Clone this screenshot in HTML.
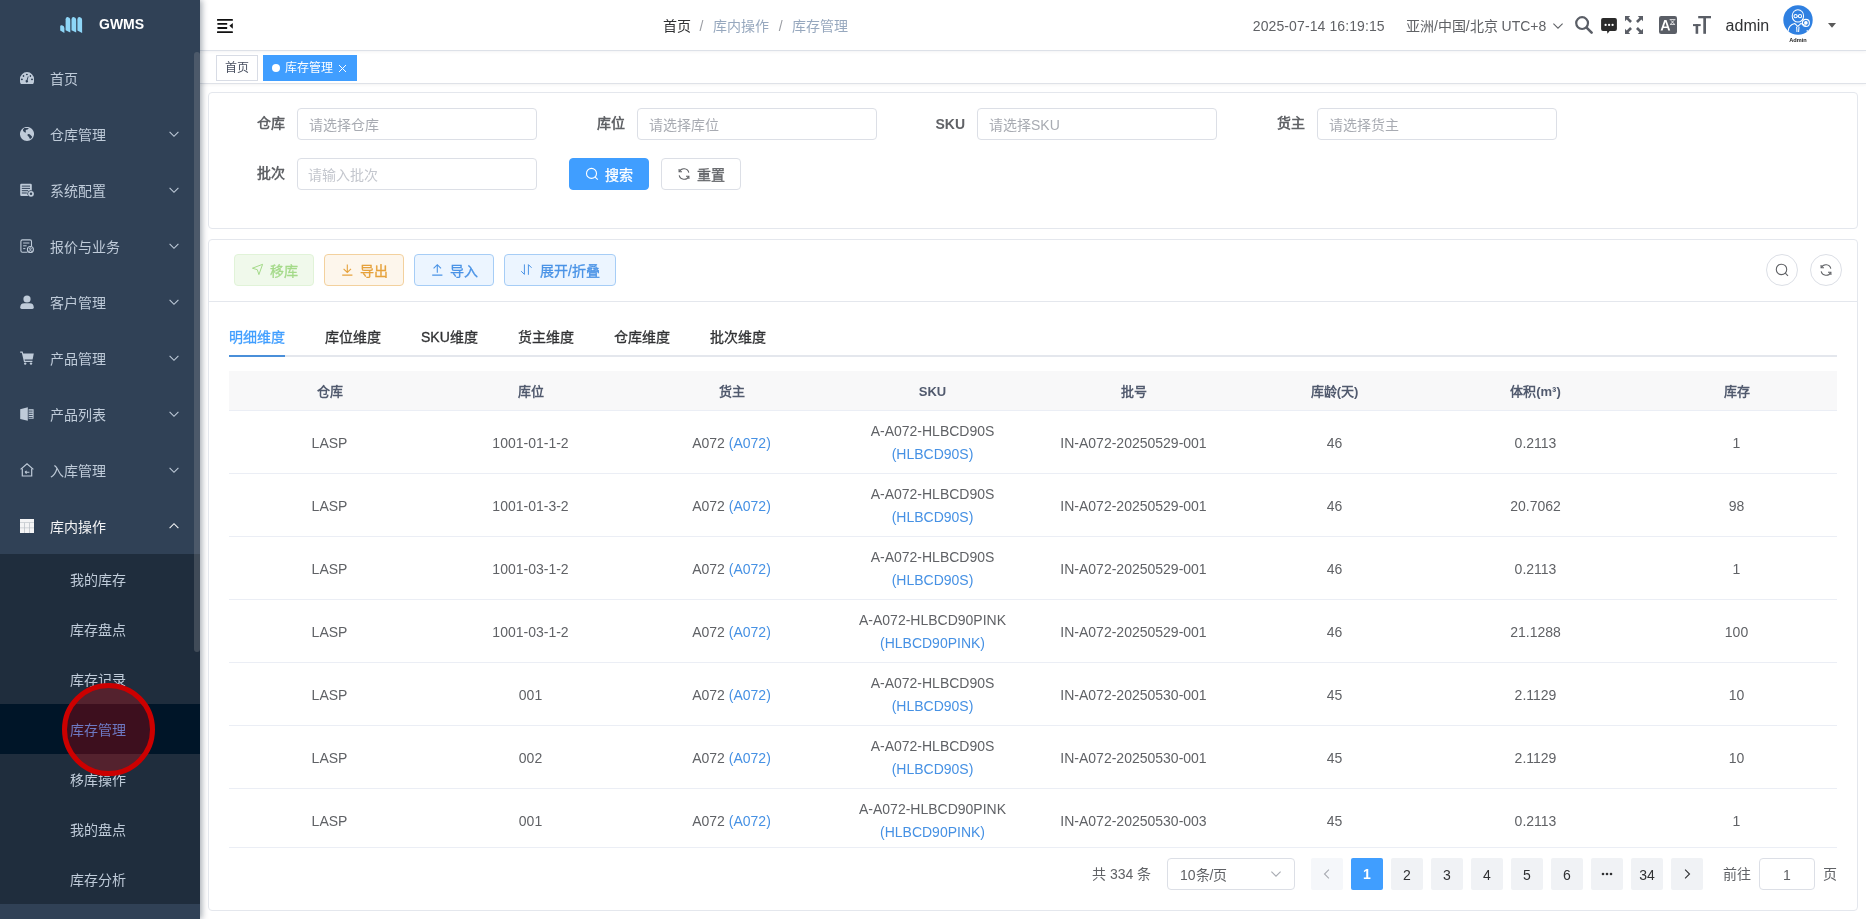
<!DOCTYPE html>
<html lang="zh-CN">
<head>
<meta charset="utf-8">
<title>GWMS</title>
<style>
*{box-sizing:border-box;margin:0;padding:0}
html,body{width:1866px;height:919px;overflow:hidden;background:#fff}
body{will-change:transform;position:relative;font-family:"Liberation Sans",sans-serif;font-size:14px;color:#606266;-webkit-font-smoothing:antialiased}
.abs{position:absolute}
svg{display:block}
/* ---------- sidebar ---------- */
#sidebar{position:absolute;left:0;top:0;width:200px;height:919px;background:#304156;box-shadow:2px 0 6px rgba(0,21,41,.35);z-index:10;overflow:hidden}
#logo-text{position:absolute;left:99px;top:14px;height:20px;line-height:20px;font-size:14px;font-weight:700;color:#fff;letter-spacing:0}
.mi{position:absolute;left:0;width:200px;height:56px;line-height:56px;color:#bfcbd9;font-size:14px}
.mi .ic{position:absolute;left:20px;top:21px;width:14px;height:14px}
.mi .tx{position:absolute;left:50px;top:1px;white-space:nowrap}
.mi .ar{position:absolute;left:168px;top:22px;width:12px;height:12px}
.mi.on{color:#f4f4f5}
#sub{position:absolute;left:0;top:554px;width:200px;height:350px;background:#1f2d3d}
.si{position:absolute;left:0;width:200px;height:50px;line-height:50px;color:#bfcbd9;font-size:14px}
.si span{position:absolute;left:70px;top:1px;white-space:nowrap}
.si.act{background:#001528;color:#409eff}
#sbthumb{position:absolute;left:194px;top:52px;width:6px;height:600px;border-radius:3px;background:rgba(144,147,153,.3)}
/* ---------- navbar ---------- */
#navbar{position:absolute;left:200px;top:0;width:1666px;height:51px;background:#fff;border-bottom:1px solid #dde1e8;box-shadow:0 1px 3px rgba(0,21,41,.05);z-index:3}
.bc{position:absolute;top:16px;height:20px;line-height:20px;font-size:14px;white-space:nowrap}
.nt{position:absolute;top:16px;height:20px;line-height:20px;font-size:14px;white-space:nowrap;color:#606266}
/* ---------- tags ---------- */
#tags{position:absolute;left:200px;top:50px;width:1666px;height:34px;background:#fff;border-bottom:1px solid #dfe2e8;box-shadow:0 1px 3px 0 rgba(0,0,0,.05);z-index:2}
.tag{position:absolute;top:5px;height:26px;line-height:24px;border:1px solid #d8dce5;font-size:12px;color:#495060;background:#fff;white-space:nowrap}
/* ---------- cards ---------- */
.card{position:absolute;left:208px;width:1650px;background:#fff;border:1px solid #e4e7ed;border-radius:4px}
.lbl{position:absolute;height:32px;line-height:31px;font-size:14px;font-weight:700;color:#606266;white-space:nowrap}
.inp{position:absolute;width:240px;height:32px;border:1px solid #dcdfe6;border-radius:4px;background:#fff;line-height:32px;padding-left:11px;font-size:14px;color:#a8abb2;white-space:nowrap}
.btn{position:absolute;height:32px;border-radius:4px;border:1px solid #dcdfe6;font-size:14px;font-weight:500;line-height:30px;white-space:nowrap}
.btn svg{position:absolute}
.btn span{position:absolute;top:1px;-webkit-text-stroke:.3px currentColor}

.tab{position:absolute;top:77px;height:40px;line-height:40px;font-size:14px;font-weight:500;white-space:nowrap;-webkit-text-stroke:.3px currentColor}
.thead{position:relative;height:40px;background:#f8f8f9;border-bottom:1px solid #ebeef5;display:flex}
.th{width:201px;height:39px;line-height:41px;text-align:center;font-size:13px;font-weight:700;color:#515a6e;white-space:nowrap}
.tr{position:relative;height:63px;border-bottom:1px solid #ebeef5;display:flex}
.td{width:201px;height:62px;padding-top:2px;display:flex;align-items:center;justify-content:center;text-align:center;font-size:14px;color:#606266;line-height:23px;white-space:pre}
.two{line-height:23px}
.lk{color:#4691e4}
.pg-t{height:32px;line-height:32px;font-size:14px;color:#606266;white-space:nowrap}
.pb{position:absolute;top:618px;width:32px;height:32px;border-radius:2px;background:#f0f2f5;line-height:34px;text-align:center;font-size:14px;color:#303133}
</style>
</head>
<body>
<!-- SIDEBAR -->
<div id="sidebar">
  <svg class="abs" style="left:59px;top:16px" width="24" height="18" viewBox="0 0 24 18">
    <g fill="#8ed6f7">
      <path d="M1.2 10.6 Q1.2 8.8 3 9.2 Q5.4 9.9 5.4 12 L5.4 16.9 L1.2 14.6 Z"/>
      <path d="M6.6 3.6 Q6.6 0.8 8.6 1.1 Q11.3 1.6 11.3 4.4 L11.3 16.6 L6.6 14.3 Z"/>
      <path d="M12.5 3.6 Q12.5 0.8 14.5 1.1 Q17.2 1.6 17.2 4.4 L17.2 16.6 L12.5 14.3 Z"/>
      <path d="M18.4 3.6 Q18.4 0.8 20.4 1.1 Q23.1 1.6 23.1 4.4 L23.1 16.9 L18.4 14.6 Z"/>
    </g>
  </svg>
  <div id="logo-text">GWMS</div>
  <div id="menu"><div class="mi" style="top:50px"><svg class="ic" viewBox="0 0 14 14"><path fill="currentColor" d="M7 1.1 A7 7 0 0 0 0 8.1 V10.6 Q0 11.9 .9 13 H13.1 Q14 11.9 14 10.6 V8.1 A7 7 0 0 0 7 1.1 Z"/>
<g fill="#304156"><ellipse cx="1.9" cy="8.4" rx="1" ry=".8"/><ellipse cx="3.5" cy="4.9" rx=".8" ry="1"/><ellipse cx="6.9" cy="3.5" rx="1" ry=".8"/><ellipse cx="10.4" cy="4.9" rx=".8" ry="1"/><ellipse cx="12" cy="8.4" rx="1" ry=".8"/><path d="M7.9 5.3 L8.6 5.5 L7.6 9.2 A1.25 1.25 0 1 1 6.6 8.95 Z"/></g></svg><span class="tx">首页</span></div>
<div class="mi" style="top:106px"><svg class="ic" viewBox="0 0 14 14"><circle cx="7" cy="6.95" r="7.05" fill="currentColor"/>
<g fill="#304156"><path d="M3 2.6 L4.4 1.1 L8.9 1.1 L7.6 2.4 L6.3 2.8 L5.6 3.6 L5.9 4.9 L5.5 5.7 L4.2 4.9 L3.1 3.9Z"/><path d="M7.2 8 L8.2 7.1 L9.7 7.3 L10.7 8.3 L12 9.6 L11.75 10.7 L10.7 11.7 L9.7 11.7 L9.4 10.7 L8.5 9.4Z"/></g></svg><span class="tx">仓库管理</span><svg class="ar" viewBox="0 0 12 12" fill="none" stroke="currentColor" stroke-width="1.1"><path d="M1.6 3.9 L6 8.3 L10.4 3.9"/></svg></div>
<div class="mi" style="top:162px"><svg class="ic" viewBox="0 0 14 14"><path fill="currentColor" d="M1.4 .8 H10.6 Q11.8 .8 11.8 2 V7.4 A3.4 3.4 0 0 0 8.2 12.9 H1.4 Q.2 12.9 .2 11.7 V2 Q.2 .8 1.4 .8Z"/>
<g fill="#304156"><rect x="1.8" y="2.6" width="8.2" height="1"/><rect x="1.8" y="4.9" width="8.2" height="1"/><rect x="1.8" y="7.2" width="6.4" height="1"/><rect x="1.8" y="9.5" width="5" height="1"/></g>
<circle cx="11" cy="10.8" r="2.9" fill="currentColor"/><circle cx="11" cy="10.8" r="1.2" fill="#304156"/></svg><span class="tx">系统配置</span><svg class="ar" viewBox="0 0 12 12" fill="none" stroke="currentColor" stroke-width="1.1"><path d="M1.6 3.9 L6 8.3 L10.4 3.9"/></svg></div>
<div class="mi" style="top:218px"><svg class="ic" viewBox="0 0 14 14" fill="none" stroke="currentColor" stroke-width="1.1"><path d="M7.4 13.2 H2.4 Q.9 13.2 .9 11.7 V2.4 Q.9 .9 2.4 .9 H10 Q11.5 .9 11.5 2.4 V7.2"/><path d="M3.2 4 H9.4 M3.2 6.8 H6.6 M3.2 9.6 H5.4" stroke-width="1"/><circle cx="10.4" cy="10.5" r="3"/><circle cx="10.4" cy="9.7" r=".9" stroke-width=".9"/><path d="M8.7 12.5 Q10.4 10.6 12.1 12.5" stroke-width=".9"/></svg><span class="tx">报价与业务</span><svg class="ar" viewBox="0 0 12 12" fill="none" stroke="currentColor" stroke-width="1.1"><path d="M1.6 3.9 L6 8.3 L10.4 3.9"/></svg></div>
<div class="mi" style="top:274px"><svg class="ic" viewBox="0 0 14 14"><g fill="currentColor"><ellipse cx="7" cy="4" rx="3.6" ry="3.5"/><path d="M.2 12.6 Q.2 8.2 4.4 8.2 H9.6 Q13.8 8.2 13.8 12.6 Q13.8 14 12.4 14 H1.6 Q.2 14 .2 12.6Z"/></g></svg><span class="tx">客户管理</span><svg class="ar" viewBox="0 0 12 12" fill="none" stroke="currentColor" stroke-width="1.1"><path d="M1.6 3.9 L6 8.3 L10.4 3.9"/></svg></div>
<div class="mi" style="top:330px"><svg class="ic" viewBox="0 0 14 14"><g fill="currentColor"><path d="M.2 .6 H2.6 L3.2 2.6 H13.8 L12.6 8.6 H4.6 L4.9 9.8 H12.4 V11 H4 L1.8 1.8 H.2Z"/><circle cx="5.2" cy="12.6" r="1.2"/><circle cx="11" cy="12.6" r="1.2"/></g></svg><span class="tx">产品管理</span><svg class="ar" viewBox="0 0 12 12" fill="none" stroke="currentColor" stroke-width="1.1"><path d="M1.6 3.9 L6 8.3 L10.4 3.9"/></svg></div>
<div class="mi" style="top:386px"><svg class="ic" viewBox="0 0 14 14"><g fill="currentColor"><path d="M.2 2.2 L7.8 .2 V13.8 L.2 12Z"/><path d="M8.6 2.2 H13.6 V11.8 H8.6Z"/></g><g fill="#304156"><rect x="8.6" y="3.6" width="4" height=".9"/><rect x="8.6" y="5.8" width="4" height=".9"/><rect x="8.6" y="8" width="4" height=".9"/><rect x="8.6" y="10.2" width="4" height=".9"/></g></svg><span class="tx">产品列表</span><svg class="ar" viewBox="0 0 12 12" fill="none" stroke="currentColor" stroke-width="1.1"><path d="M1.6 3.9 L6 8.3 L10.4 3.9"/></svg></div>
<div class="mi" style="top:442px"><svg class="ic" viewBox="0 0 14 14" fill="none" stroke="currentColor" stroke-width="1.2"><path d="M.6 6.4 L7 .9 L13.4 6.4"/><path d="M2.3 5.6 V13 H11.7 V5.6"/><path d="M5 9.2 H9.4 M5 9.2 L6.6 7.8 M5 9.2 L6.6 10.6" stroke-width="1.1"/></svg><span class="tx">入库管理</span><svg class="ar" viewBox="0 0 12 12" fill="none" stroke="currentColor" stroke-width="1.1"><path d="M1.6 3.9 L6 8.3 L10.4 3.9"/></svg></div>
<div class="mi on" style="top:498px"><svg class="ic" viewBox="0 0 14 14"><rect x="0" y="0" width="14" height="14" fill="currentColor"/><g fill="#304156" opacity=".3"><rect x="4.3" y="3.8" width=".7" height="10.2"/><rect x="9" y="3.8" width=".7" height="10.2"/><rect x="0" y="3.4" width="14" height=".6"/><rect x="0" y="8.6" width="14" height=".6"/></g></svg><span class="tx">库内操作</span><svg class="ar" viewBox="0 0 12 12" fill="none" stroke="currentColor" stroke-width="1.1"><path d="M1.6 8.1 L6 3.7 L10.4 8.1"/></svg></div>
</div>
  <div id="sub"><div class="si" style="top:0px"><span>我的库存</span></div>
<div class="si" style="top:50px"><span>库存盘点</span></div>
<div class="si" style="top:100px"><span>库存记录</span></div>
<div class="si act" style="top:150px"><span>库存管理</span></div>
<div class="si" style="top:200px"><span>移库操作</span></div>
<div class="si" style="top:250px"><span>我的盘点</span></div>
<div class="si" style="top:300px"><span>库存分析</span></div>
</div>
  <div id="sbthumb"></div>
</div>
<!-- NAVBAR -->
<div id="navbar">
  <svg class="abs" style="left:17px;top:18px" width="16" height="16" viewBox="0 0 16 16"><g fill="#111"><rect x="0" y="0.9" width="15.9" height="1.8" rx=".5"/><rect x=".4" y="5" width="9.8" height="1.8" rx=".4"/><rect x=".4" y="9.1" width="9.8" height="1.8" rx=".4"/><rect x="0" y="13.2" width="15.9" height="1.8" rx=".5"/><path d="M15.8 5 V10.7 L12.4 7.85 Z"/></g></svg>
  <span class="bc" style="left:462.5px;color:#303133">首页</span>
  <span class="bc" style="left:499.6px;color:#9a9da3;font-weight:400">/</span>
  <span class="bc" style="left:513px;color:#97a8be">库内操作</span>
  <span class="bc" style="left:578.8px;color:#9a9da3;font-weight:400">/</span>
  <span class="bc" style="left:792.2px;color:#97a8be;margin-left:-200px">库存管理</span>
  <span class="nt" style="left:1052.8px;letter-spacing:.1px">2025-07-14 16:19:15</span>
  <span class="nt" style="left:1205.9px">亚洲/中国/北京 UTC+8</span>
  <svg class="abs" style="left:1352px;top:20px" width="12" height="12" viewBox="0 0 12 12" fill="none" stroke="#606266" stroke-width="1.1"><path d="M1.4 3.6 L6 8.2 L10.6 3.6"/></svg>
  <!-- search -->
  <svg class="abs" style="left:1375px;top:16px" width="18" height="18" viewBox="0 0 18 18" fill="none" stroke="#5a5e66"><circle cx="7.1" cy="7.1" r="5.9" stroke-width="2.2"/><path d="M11.6 11.6 L16.6 16.6" stroke-width="2.6" stroke-linecap="round"/></svg>
  <!-- message -->
  <svg class="abs" style="left:1400px;top:17px" width="18" height="18" viewBox="0 0 18 18"><path fill="#2a2a2a" d="M3 1 H15 Q16.9 1 16.9 2.9 V12 Q16.9 13.9 15 13.9 H9.6 L7.5 16.7 L7 13.9 H3 Q1.1 13.9 1.1 12 V2.9 Q1.1 1 3 1Z"/><g fill="#fff"><circle cx="5.6" cy="7.9" r="1.15"/><circle cx="9.1" cy="7.9" r="1.15"/><circle cx="12.6" cy="7.9" r="1.15"/></g></svg>
  <!-- fullscreen -->
  <svg class="abs" style="left:1425px;top:16px" width="18" height="18" viewBox="0 0 18 18"><g fill="#5a5e66"><path d="M0 0 H5.2 L3.55 1.65 L7 5.1 L5.1 7 L1.65 3.55 L0 5.2Z"/><path d="M18 0 V5.2 L16.35 3.55 L12.9 7 L11 5.1 L14.45 1.65 L12.8 0Z"/><path d="M0 18 V12.8 L1.65 14.45 L5.1 11 L7 12.9 L3.55 16.35 L5.2 18Z"/><path d="M18 18 H12.8 L14.45 16.35 L11 12.9 L12.9 11 L16.35 14.45 L18 12.8Z"/></g></svg>
  <!-- language -->
  <svg class="abs" style="left:1459px;top:16px" width="18" height="18" viewBox="0 0 18 18"><rect x="0" y="0" width="18" height="18" rx="2.2" fill="#5a5e66"/><path fill="#fff" d="M5.3 3.9 H7.5 L11.2 14.6 H9.2 L8.4 12.1 H4.4 L3.6 14.6 H1.6Z M6.4 5.9 L4.95 10.5 H7.85Z"/><g stroke="#fff" stroke-width=".8" fill="none"><path d="M10.6 3.6 H16.4 M11 8.4 H16 M12 4.4 L15.4 8.2 M15 4.4 L11.6 8.2"/></g></svg>
  <!-- size -->
  <svg class="abs" style="left:1493px;top:16px" width="18" height="18" viewBox="0 0 18 18"><g fill="#5a5e66"><rect x="5.2" y="0" width="12.8" height="2.3"/><rect x="10.3" y="0" width="2.7" height="17.8"/><rect x="0" y="8.1" width="7.7" height="2"/><rect x="2.6" y="8.1" width="2.6" height="9.7"/></g></svg>
  <span class="abs" style="left:1525.6px;top:15px;height:22px;line-height:22px;font-size:16px;color:#303133">admin</span>
  <!-- avatar -->
  <svg class="abs" style="left:1578px;top:5px" width="40" height="40" viewBox="0 0 40 40"><circle cx="20" cy="15" r="14.7" fill="#2f80e1"/><g fill="none" stroke="#fff" stroke-width="1.05"><ellipse cx="19.9" cy="10.9" rx="5.7" ry="6.2"/><circle cx="17.6" cy="11.2" r="1.6"/><circle cx="22" cy="11.2" r="1.6"/><path d="M19.2 11.2 H20.4"/><path d="M10.2 26 Q10.6 20 16.8 18.6 L19.8 21.4 L22.8 18.6 Q26 19.4 27.6 21"/><path d="M29.2 25 V26.4"/><path d="M18.6 21.6 L19 27 M21 21.6 L20.6 27"/><circle cx="27.9" cy="17.9" r="3.5" stroke-width="1.1"/><circle cx="27.9" cy="17.9" r="1.3" fill="#fff"/></g><text x="20" y="36.6" font-family="Liberation Sans, sans-serif" font-size="5.6" font-weight="700" fill="#222" text-anchor="middle">Admin</text></svg>
  <svg class="abs" style="left:1628px;top:23px" width="8" height="5" viewBox="0 0 8 5"><path d="M0 0 H8 L4 4.8Z" fill="#5a5a5a"/></svg>
</div>
<!-- TAGS -->
<div id="tags"><div class="tag" style="left:16px;width:42px;padding-left:8px">首页</div><div class="tag" style="left:63px;width:94px;background:#409eff;border-color:#409eff;color:#fff"><i style="position:absolute;left:8px;top:8px;width:8px;height:8px;border-radius:50%;background:#fff"></i><span style="position:absolute;left:21px;top:0">库存管理</span><svg style="position:absolute;left:74px;top:8px" width="9" height="9" viewBox="0 0 9 9" stroke="#fff" stroke-width="1" fill="none"><path d="M1 1 L8 8 M8 1 L1 8"/></svg></div></div>
<!-- CARDS -->
<div class="card" id="card1" style="top:92px;height:137px">
  <div class="lbl" style="left:20px;top:15px;width:56px;text-align:right">仓库</div>
  <div class="inp" style="left:88px;top:15px">请选择仓库</div>
  <div class="lbl" style="left:360px;top:15px;width:56px;text-align:right">库位</div>
  <div class="inp" style="left:428px;top:15px">请选择库位</div>
  <div class="lbl" style="left:700px;top:15px;width:56px;text-align:right;line-height:33px">SKU</div>
  <div class="inp" style="left:768px;top:15px">请选择SKU</div>
  <div class="lbl" style="left:1040px;top:15px;width:56px;text-align:right">货主</div>
  <div class="inp" style="left:1108px;top:15px">请选择货主</div>
  <div class="lbl" style="left:20px;top:65px;width:56px;text-align:right">批次</div>
  <div class="inp" style="left:88px;top:65px;color:#c4c7ce;padding-left:10px">请输入批次</div>
  <div class="btn" style="left:360px;top:65px;width:80px;background:#409eff;border-color:#409eff;color:#fff">
    <svg style="left:15px;top:8px" width="14" height="14" viewBox="0 0 14 14" fill="none" stroke="#fff" stroke-width="1.1"><circle cx="6.5" cy="6.4" r="5"/><path d="M10.2 10.1 L12.8 12.7"/></svg>
    <span style="left:35px">搜索</span>
  </div>
  <div class="btn" style="left:452px;top:65px;width:80px;background:#fff;color:#606266">
    <svg style="left:15px;top:8px" width="14" height="14" viewBox="0 0 14 14" fill="none" stroke="#606266" stroke-width="1.1"><g transform="translate(14,0) scale(-1,1)"><path d="M2.2 5.6 A5 5 0 0 1 11.6 4.6"/><path d="M11.8 8.4 A5 5 0 0 1 2.4 9.4"/><path d="M11.9 1.9 V4.8 H9"/><path d="M2.1 12.1 V9.2 H5"/></g></svg>
    <span style="left:35px">重置</span>
  </div>
</div>
<div class="card" id="card2" style="top:239px;height:672px">
  <!-- toolbar -->
  <div class="btn" style="left:25px;top:14px;width:80px;background:#f0f9eb;border-color:#e1f3d8;color:#a4da89">
    <svg style="left:15.8px;top:8.4px" width="13" height="13" viewBox="0 0 13 13" fill="none" stroke="#a4da89" stroke-width="1"><path d="M11.6 1.3 L1.4 5.2 L6.3 6.7 L7.9 11.6 Z" stroke-linejoin="round"/></svg>
    <span style="left:34.6px">移库</span></div>
  <div class="btn" style="left:115px;top:14px;width:80px;background:#fdf6ec;border-color:#f3d19e;color:#e6a23c">
    <svg style="left:15.8px;top:8.4px" width="13" height="13" viewBox="0 0 13 13" fill="none" stroke="#e6a23c" stroke-width="1.1"><path d="M6.3 1.4 V9.4 M2.6 5.8 L6.3 9.5 L10 5.8 M1.2 12.1 H11.4"/></svg>
    <span style="left:34.6px">导出</span></div>
  <div class="btn" style="left:205px;top:14px;width:80px;background:#ecf5ff;border-color:#a6cdf6;color:#4a93e6">
    <svg style="left:15.8px;top:8.4px" width="13" height="13" viewBox="0 0 13 13" fill="none" stroke="#4a93e6" stroke-width="1.1"><path d="M6.3 9.8 V1.9 M2.6 5.4 L6.3 1.7 L10 5.4 M1.2 12.1 H11.4"/></svg>
    <span style="left:34.6px">导入</span></div>
  <div class="btn" style="left:295px;top:14px;width:112px;background:#ecf5ff;border-color:#a6cdf6;color:#4a93e6">
    <svg style="left:14.6px;top:8.4px" width="13" height="13" viewBox="0 0 13 13" fill="none" stroke="#4a93e6" stroke-width="1"><path d="M4.4 1.4 V11.4 L1.2 8.2 M8.4 11.8 V1.6 L11.6 4.8"/></svg>
    <span style="left:35.1px">展开/折叠</span></div>
  <div class="abs" style="left:1557px;top:14px;width:32px;height:32px;border:1px solid #dcdfe6;border-radius:50%"><svg class="abs" style="left:8px;top:8px" width="14" height="14" viewBox="0 0 14 14" fill="none" stroke="#606266" stroke-width="1.1"><circle cx="6.5" cy="6.4" r="5.2"/><path d="M10.3 10.2 L13 12.9"/></svg></div>
  <div class="abs" style="left:1601px;top:14px;width:32px;height:32px;border:1px solid #dcdfe6;border-radius:50%"><svg class="abs" style="left:8px;top:8px" width="14" height="14" viewBox="0 0 14 14" fill="none" stroke="#606266" stroke-width="1.1"><g transform="translate(14,0) scale(-1,1)"><path d="M2.2 5.6 A5 5 0 0 1 11.6 4.6"/><path d="M11.8 8.4 A5 5 0 0 1 2.4 9.4"/><path d="M11.9 1.9 V4.8 H9"/><path d="M2.1 12.1 V9.2 H5"/></g></svg></div>
  <div class="abs" style="left:0;top:61px;width:1648px;height:1px;background:#e4e7ed"></div>
  <!-- tabs -->
  <div class="tab" style="left:20px;color:#409eff">明细维度</div>
  <div class="tab" style="left:116px;color:#303133">库位维度</div>
  <div class="tab" style="left:212px;color:#303133">SKU维度</div>
  <div class="tab" style="left:308.8px;color:#303133">货主维度</div>
  <div class="tab" style="left:404.8px;color:#303133">仓库维度</div>
  <div class="tab" style="left:500.8px;color:#303133">批次维度</div>
  <div class="abs" style="left:20px;top:115px;width:1608px;height:2px;background:#e4e7ed"></div>
  <div class="abs" style="left:20px;top:115px;width:56px;height:2px;background:#4a8fd9"></div>
  <!-- table -->
  <div class="abs" id="tbl" style="left:20px;top:131px;width:1608px;height:477px;overflow:hidden;border-bottom:1px solid #ebeef5">
    <div class="thead"><div class="th">仓库</div><div class="th">库位</div><div class="th">货主</div><div class="th">SKU</div><div class="th">批号</div><div class="th">库龄(天)</div><div class="th">体积(m³)</div><div class="th">库存</div></div>
    <div class="tr"><div class="td">LASP</div><div class="td">1001-01-1-2</div><div class="td">A072 <span class="lk">(A072)</span></div><div class="td"><div class="two">A-A072-HLBCD90S<br><span class="lk">(HLBCD90S)</span></div></div><div class="td">IN-A072-20250529-001</div><div class="td">46</div><div class="td">0.2113</div><div class="td">1</div></div>
    <div class="tr"><div class="td">LASP</div><div class="td">1001-01-3-2</div><div class="td">A072 <span class="lk">(A072)</span></div><div class="td"><div class="two">A-A072-HLBCD90S<br><span class="lk">(HLBCD90S)</span></div></div><div class="td">IN-A072-20250529-001</div><div class="td">46</div><div class="td">20.7062</div><div class="td">98</div></div>
    <div class="tr"><div class="td">LASP</div><div class="td">1001-03-1-2</div><div class="td">A072 <span class="lk">(A072)</span></div><div class="td"><div class="two">A-A072-HLBCD90S<br><span class="lk">(HLBCD90S)</span></div></div><div class="td">IN-A072-20250529-001</div><div class="td">46</div><div class="td">0.2113</div><div class="td">1</div></div>
    <div class="tr"><div class="td">LASP</div><div class="td">1001-03-1-2</div><div class="td">A072 <span class="lk">(A072)</span></div><div class="td"><div class="two">A-A072-HLBCD90PINK<br><span class="lk">(HLBCD90PINK)</span></div></div><div class="td">IN-A072-20250529-001</div><div class="td">46</div><div class="td">21.1288</div><div class="td">100</div></div>
    <div class="tr"><div class="td">LASP</div><div class="td">001</div><div class="td">A072 <span class="lk">(A072)</span></div><div class="td"><div class="two">A-A072-HLBCD90S<br><span class="lk">(HLBCD90S)</span></div></div><div class="td">IN-A072-20250530-001</div><div class="td">45</div><div class="td">2.1129</div><div class="td">10</div></div>
    <div class="tr"><div class="td">LASP</div><div class="td">002</div><div class="td">A072 <span class="lk">(A072)</span></div><div class="td"><div class="two">A-A072-HLBCD90S<br><span class="lk">(HLBCD90S)</span></div></div><div class="td">IN-A072-20250530-001</div><div class="td">45</div><div class="td">2.1129</div><div class="td">10</div></div>
    <div class="tr"><div class="td">LASP</div><div class="td">001</div><div class="td">A072 <span class="lk">(A072)</span></div><div class="td"><div class="two">A-A072-HLBCD90PINK<br><span class="lk">(HLBCD90PINK)</span></div></div><div class="td">IN-A072-20250530-003</div><div class="td">45</div><div class="td">0.2113</div><div class="td">1</div></div>
  </div>
  <!-- pagination -->
  <div class="abs pg-t" style="left:883px;top:618px">共 334 条</div>
  <div class="abs" style="left:958px;top:618px;width:128px;height:32px;border:1px solid #dcdfe6;border-radius:4px;line-height:32px;padding-left:12px;color:#606266;font-size:14px">10条/页<svg class="abs" style="left:102px;top:9px" width="12" height="12" viewBox="0 0 12 12" fill="none" stroke="#a8abb2" stroke-width="1.1"><path d="M1.4 3.6 L6 8.2 L10.6 3.6"/></svg></div>
  <div class="pb" style="left:1102px;background:#f5f7fa"><svg class="abs" style="left:10px;top:10px" width="12" height="12" viewBox="0 0 12 12" fill="none" stroke="#a8abb2" stroke-width="1.1"><path d="M7.9 1.6 L3.5 6 L7.9 10.4"/></svg></div>
  <div class="pb" style="left:1142px;background:#409eff;color:#fff;font-weight:700;line-height:32px">1</div>
  <div class="pb" style="left:1182px">2</div>
  <div class="pb" style="left:1222px">3</div>
  <div class="pb" style="left:1262px">4</div>
  <div class="pb" style="left:1302px">5</div>
  <div class="pb" style="left:1342px">6</div>
  <div class="pb" style="left:1382px"><svg class="abs" style="left:10px;top:14px" width="12" height="4" viewBox="0 0 12 4" fill="#303133"><circle cx="2" cy="2" r="1.3"/><circle cx="6" cy="2" r="1.3"/><circle cx="10" cy="2" r="1.3"/></svg></div>
  <div class="pb" style="left:1422px">34</div>
  <div class="pb" style="left:1462px"><svg class="abs" style="left:10px;top:10px" width="12" height="12" viewBox="0 0 12 12" fill="none" stroke="#303133" stroke-width="1.1"><path d="M4.1 1.6 L8.5 6 L4.1 10.4"/></svg></div>
  <div class="abs pg-t" style="left:1514px;top:618px">前往</div>
  <div class="abs" style="left:1550px;top:618px;width:56px;height:32px;border:1px solid #dcdfe6;border-radius:4px;line-height:32px;text-align:center;color:#606266;font-size:14px">1</div>
  <div class="abs pg-t" style="left:1614px;top:618px">页</div>
</div>
<!-- RED CIRCLE -->
<div class="abs" style="left:62px;top:683px;width:93px;height:93px;border-radius:50%;border:5.5px solid #cc0000;background:rgba(255,0,0,.24);z-index:50"></div>
</body>
</html>
